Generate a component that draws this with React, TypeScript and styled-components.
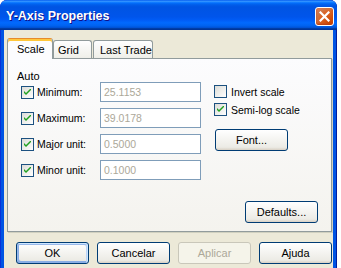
import React from 'react';
import styled, { createGlobalStyle } from 'styled-components';

const GlobalStyle = createGlobalStyle`
  html, body {
    margin: 0;
    padding: 0;
    background: #ffffff;
  }
  #root {
    width: 341px;
    height: 268px;
    overflow: hidden;
  }
`;

const rows = [
  { label: 'Minimum:', value: '25.1153' },
  { label: 'Maximum:', value: '39.0178' },
  { label: 'Major unit:', value: '0.5000' },
  { label: 'Minor unit:', value: '0.1000' },
];

const tabs = [
  { label: 'Scale', width: 46, pad: 9, selected: true },
  { label: 'Grid', width: 39, pad: 4 },
  { label: 'Last Trade', width: 60, pad: 6 },
];

const Check: React.FC<{ checked?: boolean }> = ({ checked }) => (
  <Box>
    {checked && (
      <svg width="7" height="7" viewBox="0 0 7 7">
        <path d="M0 2 L0 4 L2 6 L7 1 L7 -1 L2 4 Z" fill="#21a121" />
      </svg>
    )}
  </Box>
);

const App: React.FC = () => {
  return (
    <>
      <GlobalStyle />
      <Window>
        <TitleBar>
          <Title>Y-Axis Properties</Title>
          <CloseButton>
            <svg width="11" height="11" viewBox="0 0 11 11">
              <path d="M1.5 1.5 L9.5 9.5 M9.5 1.5 L1.5 9.5" stroke="#fff" strokeWidth="2.2" strokeLinecap="square" />
            </svg>
          </CloseButton>
        </TitleBar>
        <Body>
          <TabStrip>
            {tabs.map((t) => (
              <Tab key={t.label} selected={t.selected} w={t.width} pad={t.pad}>
                {t.label}
              </Tab>
            ))}
          </TabStrip>
          <Panel>
            <Columns>
              <LeftColumn>
                <GroupLabel>Auto</GroupLabel>
                {rows.map((r) => (
                  <Row key={r.label}>
                    <Check checked />
                    <RowLabel>{r.label}</RowLabel>
                    <Input>{r.value}</Input>
                  </Row>
                ))}
              </LeftColumn>
              <RightColumn>
                <CheckRow>
                  <Check />
                  <span>Invert scale</span>
                </CheckRow>
                <CheckRow>
                  <Check checked />
                  <span>Semi-log scale</span>
                </CheckRow>
                <FontButton>Font...</FontButton>
              </RightColumn>
            </Columns>
            <DefaultsRow>
              <Button>Defaults...</Button>
            </DefaultsRow>
          </Panel>
          <ButtonRow>
            <Button isDefault>OK</Button>
            <Button>Cancelar</Button>
            <Button disabled>Aplicar</Button>
            <Button>Ajuda</Button>
          </ButtonRow>
        </Body>
      </Window>
    </>
  );
};

const Window = styled.div`
  width: 337px;
  height: 290px;
  display: flex;
  flex-direction: column;
  background: #0054e3;
  border-radius: 7px 7px 0 0;
  box-shadow: inset 1px 0 #0831d9, inset -1px 0 #001ea0;
  font-family: 'Liberation Sans', Tahoma, sans-serif;
  font-size: 10.5px;
  color: #000;
  overflow: hidden;
`;

const TitleBar = styled.div`
  height: 30px;
  flex-shrink: 0;
  display: flex;
  align-items: center;
  justify-content: space-between;
  padding: 0 3px 0 6px;
  border-radius: 7px 7px 0 0;
  background: linear-gradient(
    180deg,
    #0058ee 0%,
    #3593ff 4%,
    #288eff 6%,
    #127dff 8%,
    #036ffc 10%,
    #0262ee 14%,
    #0057e5 20%,
    #0054e3 24%,
    #0055eb 56%,
    #005bf5 66%,
    #026afe 76%,
    #0062ef 86%,
    #0052d6 92%,
    #0040ab 94%,
    #003092 100%
  );
`;

const Title = styled.span`
  color: #fff;
  font-family: 'Liberation Sans', sans-serif;
  font-weight: bold;
  font-size: 12.5px;
  text-shadow: 1px 1px #0f1089;
  margin-top: 1px;
`;

const CloseButton = styled.div`
  width: 19px;
  height: 19px;
  box-sizing: border-box;
  margin-top: 2px;
  display: flex;
  align-items: center;
  justify-content: center;
  border: 1px solid #fff;
  border-radius: 3px;
  background: radial-gradient(circle at 85% 85%, #cc4600 0%, #dc6527 55%, #cd7546 70%, #e2805a 100%);
  box-shadow: inset 0 -1px 2px #b93c10;
`;

const Body = styled.div`
  flex: 1;
  margin: 0 4px 0 4px;
  padding: 8px 0 0 3px;
  background: #ece9d8;
`;

const TabStrip = styled.div`
  display: flex;
  align-items: flex-end;
  height: 20px;
  position: relative;
  z-index: 1;
`;

const Tab = styled.div<{ selected?: boolean; w: number; pad: number }>`
  box-sizing: border-box;
  flex-shrink: 0;
  white-space: nowrap;
  width: ${(p) => p.w}px;
  height: ${(p) => (p.selected ? '21px' : '18px')};
  padding-left: ${(p) => p.pad}px;
  margin-right: ${(p) => (p.selected ? '0' : '1px')};
  margin-bottom: ${(p) => (p.selected ? '-1px' : '0')};
  display: flex;
  align-items: center;
  font-size: 11px;
  border: 1px solid #919b9c;
  border-bottom: none;
  border-radius: 3px 3px 0 0;
  background: ${(p) =>
    p.selected ? '#fcfcfe' : 'linear-gradient(180deg, #fff, #fafaf9 26%, #f0f0ea 95%, #ecebe5)'};
  ${(p) =>
    p.selected
      ? 'border-top: 1px solid #e68b2c; box-shadow: inset 0 2px #ffc73c;'
      : ''}
`;

const Panel = styled.div`
  box-sizing: border-box;
  width: 325px;
  height: 174px;
  border: 1px solid #919b9c;
  background: linear-gradient(180deg, #fcfcfe, #f4f3ee);
  box-shadow: 1px 1px #d0d0bf;
  display: flex;
  flex-direction: column;
  justify-content: space-between;
  padding: 11px 13px 8px 9px;
`;

const Columns = styled.div`
  display: flex;
  justify-content: space-between;
`;

const LeftColumn = styled.div`
  display: flex;
  flex-direction: column;
`;

const GroupLabel = styled.div`
  font-size: 11px;
  height: 13px;
  margin-bottom: -1px;
`;

const Row = styled.div`
  display: flex;
  align-items: center;
  height: 20px;
  margin-bottom: 6px;
  padding-left: 4px;
`;

const Box = styled.div`
  width: 13px;
  height: 13px;
  box-sizing: border-box;
  border: 1px solid #1c5180;
  background: linear-gradient(135deg, #dcdcd7, #fff);
  display: flex;
  align-items: center;
  justify-content: center;
  flex-shrink: 0;
`;

const RowLabel = styled.span`
  margin-left: 3px;
  width: 63px;
`;

const Input = styled.div`
  box-sizing: border-box;
  width: 101px;
  height: 20px;
  border: 1px solid #7f9db9;
  background: #fff;
  color: #aca899;
  padding: 0 0 0 3px;
  display: flex;
  align-items: center;
`;

const RightColumn = styled.div`
  display: flex;
  flex-direction: column;
  padding-top: 15px;
  width: 104px;
`;

const CheckRow = styled.div`
  display: flex;
  align-items: center;
  gap: 4px;
  height: 13px;
  margin-bottom: 5px;
`;

const Button = styled.button<{ isDefault?: boolean }>`
  box-sizing: border-box;
  width: 73px;
  height: 22px;
  font-family: 'Liberation Sans', Tahoma, sans-serif;
  font-size: 11px;
  color: ${(p) => (p.disabled ? '#aca899' : '#000')};
  border: 1px solid ${(p) => (p.disabled ? '#c9c7ba' : '#003c74')};
  border-radius: 3px;
  padding: 0;
  background: ${(p) =>
    p.disabled ? '#f5f4ea' : 'linear-gradient(180deg, #fff, #ecebe5 86%, #d8d0c4)'};
  ${(p) =>
    p.isDefault
      ? 'box-shadow: inset -1px 1px #cee7ff, inset 1px 2px #98b8ea, inset -2px 2px #bcd4f6, inset 1px -1px #89ade4, inset 2px -2px #89ade4;'
      : ''}
`;

const FontButton = styled(Button)`
  margin-top: 8px;
  margin-left: 1px;
`;

const DefaultsRow = styled.div`
  display: flex;
  justify-content: flex-end;
`;

const ButtonRow = styled.div`
  display: flex;
  gap: 8px;
  padding: 10px 0 0 9px;
`;

export default App;
